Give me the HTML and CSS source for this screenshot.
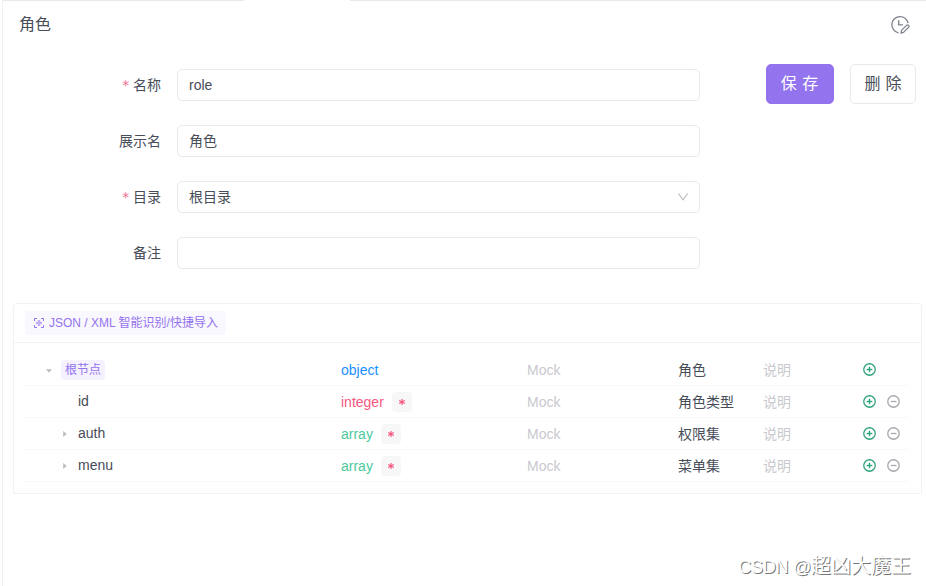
FILE: index.html
```
<!DOCTYPE html>
<html lang="zh-CN">
<head>
<meta charset="utf-8">
<title>角色</title>
<link rel="stylesheet" href="styles.css">
</head>
<body>
<svg class="defs" width="0" height="0">
  <symbol id="plus" viewBox="0 0 15 15"><circle cx="7.5" cy="7.5" r="5.75"/><path d="M4.7 7.5h5.6M7.5 4.7v5.6"/></symbol>
  <symbol id="minus" viewBox="0 0 15 15"><circle cx="7.5" cy="7.5" r="5.75"/><path d="M4.7 7.5h5.6"/></symbol>
  <symbol id="star" viewBox="0 0 8 8"><path d="M4 .9v6.2M1.2 2.4l5.6 3.2M6.8 2.4L1.2 5.6"/></symbol>
</svg>
<div class="page">
  <div class="tabline"><span class="tabgap"></span></div>
  <header class="head">
    <h1 class="title">角色</h1>
    <svg class="history" width="20" height="20" viewBox="0 0 20 20"><path d="M8.6 17.8A8.2 8.2 0 1 1 18.1 8M8.7 5.3v4.6h4.2"/><path d="M11.1 18l.4-2.6 5-5a1.3 1.3 0 0 1 2 2l-5 5z"/></svg>
  </header>
  <div class="main">
    <form class="form">
      <div class="field"><label class="label"><i class="req">*</i>名称</label><div class="input">role</div></div>
      <div class="field"><label class="label">展示名</label><div class="input">角色</div></div>
      <div class="field"><label class="label"><i class="req">*</i>目录</label><div class="input">根目录<svg class="chevron" width="12" height="10" viewBox="0 0 12 10"><path d="M1.4 1.5L6 7.9l4.6-6.4"/></svg></div></div>
      <div class="field"><label class="label">备注</label><div class="input"></div></div>
    </form>
    <div class="actions"><div class="btn primary">保 存</div><div class="btn">删 除</div></div>
  </div>
  <section class="panel">
    <div class="toolbar">
      <div class="import"><svg width="12" height="12" viewBox="0 0 12 12"><path class="corner" d="M1.5 4V1.5H4M8 1.5h2.5V4M10.5 8v2.5H8M4 10.5H1.5V8"/><path class="core" d="M6 3v6M3 6h6"/></svg>JSON / XML 智能识别/快捷导入</div>
    </div>
    <div class="tree">
      <div class="row"><div class="name root"><span class="arrow down"></span><span class="tag">根节点</span></div><div class="type object">object</div><div class="hint">Mock</div><div class="cn">角色</div><div class="hint desc">说明</div><svg class="ic add"><use href="#plus"/></svg></div>
      <div class="row"><div class="name"><span class="arrow"></span>id</div><div class="type integer">integer<span class="must"><svg><use href="#star"/></svg></span></div><div class="hint">Mock</div><div class="cn">角色类型</div><div class="hint desc">说明</div><svg class="ic add"><use href="#plus"/></svg><svg class="ic del"><use href="#minus"/></svg></div>
      <div class="row"><div class="name"><span class="arrow right"></span>auth</div><div class="type array">array<span class="must"><svg><use href="#star"/></svg></span></div><div class="hint">Mock</div><div class="cn">权限集</div><div class="hint desc">说明</div><svg class="ic add"><use href="#plus"/></svg><svg class="ic del"><use href="#minus"/></svg></div>
      <div class="row"><div class="name"><span class="arrow right"></span>menu</div><div class="type array">array<span class="must"><svg><use href="#star"/></svg></span></div><div class="hint">Mock</div><div class="cn">菜单集</div><div class="hint desc">说明</div><svg class="ic add"><use href="#plus"/></svg><svg class="ic del"><use href="#minus"/></svg></div>
    </div>
  </section>
  <footer class="mark"><span class="brand">CSDN @</span>超凶大魔王</footer>
</div>
</body>
</html>
```

FILE: styles.css
```
* { box-sizing: border-box; }
body {
  margin: 0;
  padding-left: 2px;
  background: #fff;
  color: #474d59;
  font: 14px/20px "Liberation Sans", "Noto Sans CJK SC", sans-serif;
}
svg { fill: none; flex: none; display: block; }
.defs { position: absolute; }
.page {
  height: 586px;
  border-left: 1px solid #f0f0f2;
  display: flex;
  flex-direction: column;
  overflow: hidden;
}
.tabline { height: 1px; background: #e8e9ee; flex: none; }
.tabgap { display: block; width: 106px; height: 1px; margin-left: 241px; background: #fff; }
.head {
  height: 63px;
  flex: none;
  display: flex;
  justify-content: space-between;
  align-items: flex-start;
  padding: 12px 16px 0 16px;
}
.title { margin: 0; font-size: 16px; line-height: 24px; font-weight: 400; }
.history { margin-top: 2px; stroke: #7c818b; stroke-width: 1.3; stroke-linejoin: round; }
.main { display: flex; justify-content: space-between; height: 239px; flex: none; padding-right: 10px; }
.form { display: flex; flex-direction: column; gap: 24px; padding-top: 5px; width: 697px; }
.field { display: flex; height: 32px; line-height: 32px; }
.label { width: 158px; margin-right: 16px; text-align: right; }
.req { color: #f0708f; font-style: normal; font-family: "DejaVu Sans Mono", monospace; line-height: 1; margin-right: 3px; }
.input {
  flex: 1;
  border: 1px solid #e9e9ec;
  border-radius: 5px;
  padding: 0 11px;
  line-height: 30px;
  display: flex;
  justify-content: space-between;
  align-items: center;
}
.chevron { stroke: #b8b8bb; stroke-width: 1.1; margin-right: -1px; }
.actions { display: flex; gap: 16px; height: 40px; }
.btn {
  width: 66px;
  border: 1px solid #e9e9ec;
  border-radius: 5px;
  font-size: 16px;
  line-height: 37px;
  text-align: center;
  white-space: nowrap;
  word-spacing: 0.5px;
}
.primary { width: 68px; padding-right: 1px; background: #9373ee; border-color: #9373ee; color: #fff; word-spacing: 1px; }
.panel { margin: 0 4px 0 10px; height: 191px; border: 1px solid #f2f2f4; border-radius: 4px 4px 0 0; flex: none; }
.toolbar { height: 39px; border-bottom: 1px solid #f2f2f4; padding: 7px 11px 0; display: flex; }
.import {
  height: 24px;
  padding: 0 8px;
  display: flex;
  align-items: center;
  gap: 4px;
  background: #faf8ff;
  border-radius: 4px;
  color: #9373ee;
  font-size: 12px;
}
.import svg { stroke: #9373ee; }
.import .core { stroke: #c2aff6; stroke-width: 2.4; }
.tree { padding: 11px 12px 0 11px; }
.row { display: flex; align-items: center; height: 32px; padding-top: 1px; border-bottom: 1px solid #f8f8f9; }
.name { width: 316px; padding-left: 37px; display: flex; align-items: center; margin-top: -2px; }
.root { padding-left: 21px; margin-top: 0; }
.arrow { width: 6px; height: 6px; margin-right: 10px; margin-top: 2px; flex: none; }
.down { clip-path: polygon(0 20%, 100% 20%, 50% 80%); background: #bcbdc1; }
.right { clip-path: polygon(20% 0, 80% 50%, 20% 100%); background: #bcbdc1; }
.root .arrow { margin-right: 9px; }
.tag { padding: 0 4px; background: #f5f1fe; border-radius: 4px; color: #9373ee; font-size: 12px; }
.type { width: 186px; display: flex; align-items: center; }
.object { color: #1890ff; }
.integer { color: #f5587f; }
.array { color: #4bc99b; }
.must { width: 20px; height: 20px; margin-left: 8px; padding: 6px; background: #f7f7f8; border-radius: 4px; }
.must svg { width: 8px; height: 8px; stroke: #f5587f; stroke-width: 1.2; }
.hint { width: 151px; color: #c8c9cd; }
.cn { width: 85px; }
.hint.desc { width: 99px; }
.ic { width: 15px; height: 15px; stroke-width: 1.3; margin-right: 9px; margin-top: -2px; }
.add { stroke: #30a47c; }
.del { stroke: #a5a7ad; margin-right: 0; }
.mark {
  margin: 58px 15px 0 0;
  text-align: right;
  color: #fff;
  font-size: 20px;
  line-height: 28px;
  text-shadow: 1px 1px 0.6px #777;
}
.brand { font-size: 18px; letter-spacing: -0.25px; }
```
